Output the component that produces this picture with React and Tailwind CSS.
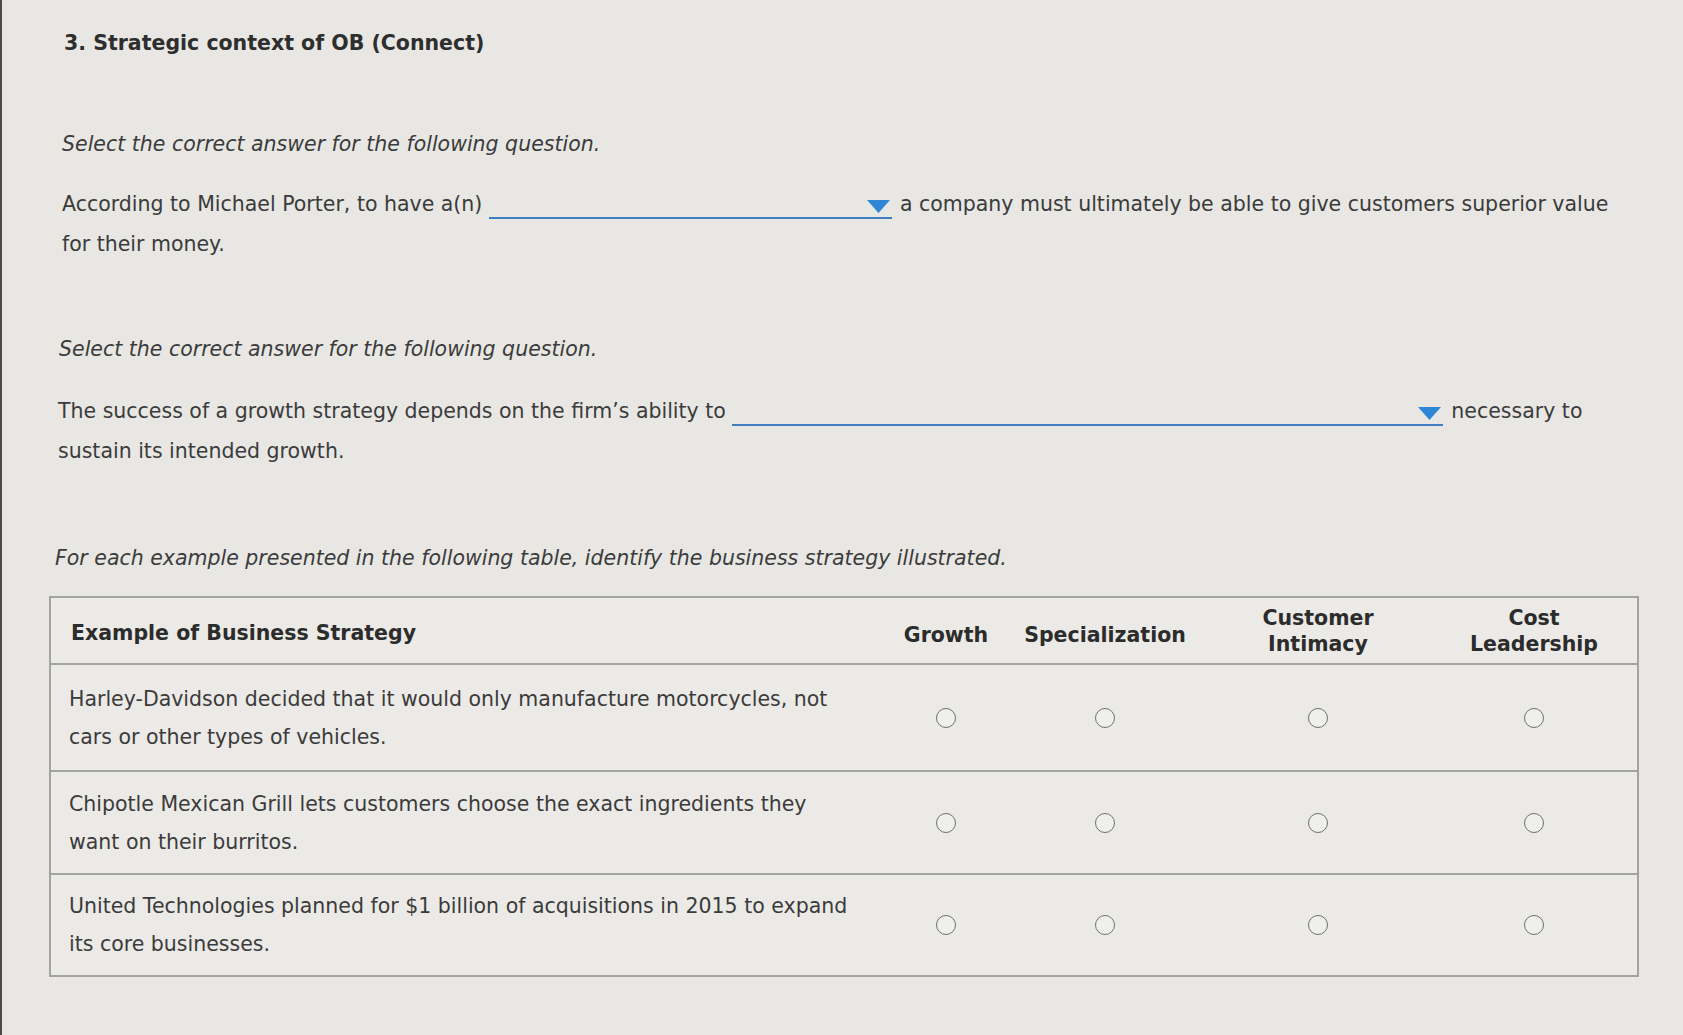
import React from "react";

const font = { fontFamily: '"DejaVu Sans", Verdana, sans-serif' };

function Dropdown({ width }) {
  return (
    <span
      className="relative inline-block align-baseline border-b-2 border-[#3f7fbd] h-[26px] translate-y-[8px]"
      style={{ width }}
    >
      <svg
        className="absolute right-[2px] top-[7px]"
        width="23"
        height="13"
        viewBox="0 0 23 13"
      >
        <polygon points="0,0 23,0 11.5,13" fill="#2f86d6" />
      </svg>
    </span>
  );
}

function Radio() {
  return (
    <span className="inline-block w-[20px] h-[20px] rounded-full border-[1.5px] border-[#6f6f6f] bg-[#efefec]" />
  );
}

const rows = [
  {
    text: "Harley-Davidson decided that it would only manufacture motorcycles, not cars or other types of vehicles.",
    h: "h-[107px]",
  },
  {
    text: "Chipotle Mexican Grill lets customers choose the exact ingredients they want on their burritos.",
    h: "h-[103px]",
  },
  {
    text: "United Technologies planned for $1 billion of acquisitions in 2015 to expand its core businesses.",
    h: "h-[100px]",
  },
];

export default function App() {
  return (
    <div
      className="w-[1683px] h-[1035px] bg-[#e8e7e3] text-[#3b3b3b] text-[20.5px] border-l-2 border-[#4a4a4a] overflow-hidden"
      style={font}
    >
      <div className="pl-[62px] pt-[23px] leading-[40px] font-bold text-[#2e2e2e]">
        3. Strategic context of OB (Connect)
      </div>

      <div className="pl-[60px] pt-[61px] leading-[40px] italic">
        Select the correct answer for the following question.
      </div>

      <div className="pl-[60px] pr-[40px] pt-[20px] leading-[40px]">
        According to Michael Porter, to have a(n){" "}
        <Dropdown width={403} />
        <span className="ml-[8px]">
          a company must ultimately be able to give customers superior value for
          their money.
        </span>
      </div>

      <div className="pl-[57px] pt-[65px] leading-[40px] italic">
        Select the correct answer for the following question.
      </div>

      <div className="pl-[56px] pr-[40px] pt-[22px] leading-[40px]">
        The success of a growth strategy depends on the firm’s ability to{" "}
        <Dropdown width={711} />
        <span className="ml-[8px]">
          necessary to sustain its intended growth.
        </span>
      </div>

      <div className="pl-[53px] pt-[67px] leading-[40px] italic">
        For each example presented in the following table, identify the business
        strategy illustrated.
      </div>

      <div className="ml-[47px] mt-[18px] w-[1590px] border-2 border-[#a3a3a1] bg-[#ebeae7]">
        <div className="grid grid-cols-[836px_118px_200px_226px_206px] h-[67px] items-center font-bold text-[#2c2c2c] leading-[26px] border-b-2 border-[#a3a3a1]">
          <div className="pl-[20px] pt-[4px]">Example of Business Strategy</div>
          <div className="text-center pt-[8px]">Growth</div>
          <div className="text-center pt-[8px]">Specialization</div>
          <div className="text-center">
            Customer
            <br />
            Intimacy
          </div>
          <div className="text-center">
            Cost
            <br />
            Leadership
          </div>
        </div>
        {rows.map((r, i) => (
          <div
            key={i}
            className={`grid grid-cols-[836px_118px_200px_226px_206px] items-center ${r.h} ${
              i < rows.length - 1 ? "border-b-2 border-[#a3a3a1]" : ""
            }`}
          >
            <div className="pl-[18px] pr-[29px] leading-[38px]">{r.text}</div>
            <div className="flex justify-center">
              <Radio />
            </div>
            <div className="flex justify-center">
              <Radio />
            </div>
            <div className="flex justify-center">
              <Radio />
            </div>
            <div className="flex justify-center">
              <Radio />
            </div>
          </div>
        ))}
      </div>
    </div>
  );
}
